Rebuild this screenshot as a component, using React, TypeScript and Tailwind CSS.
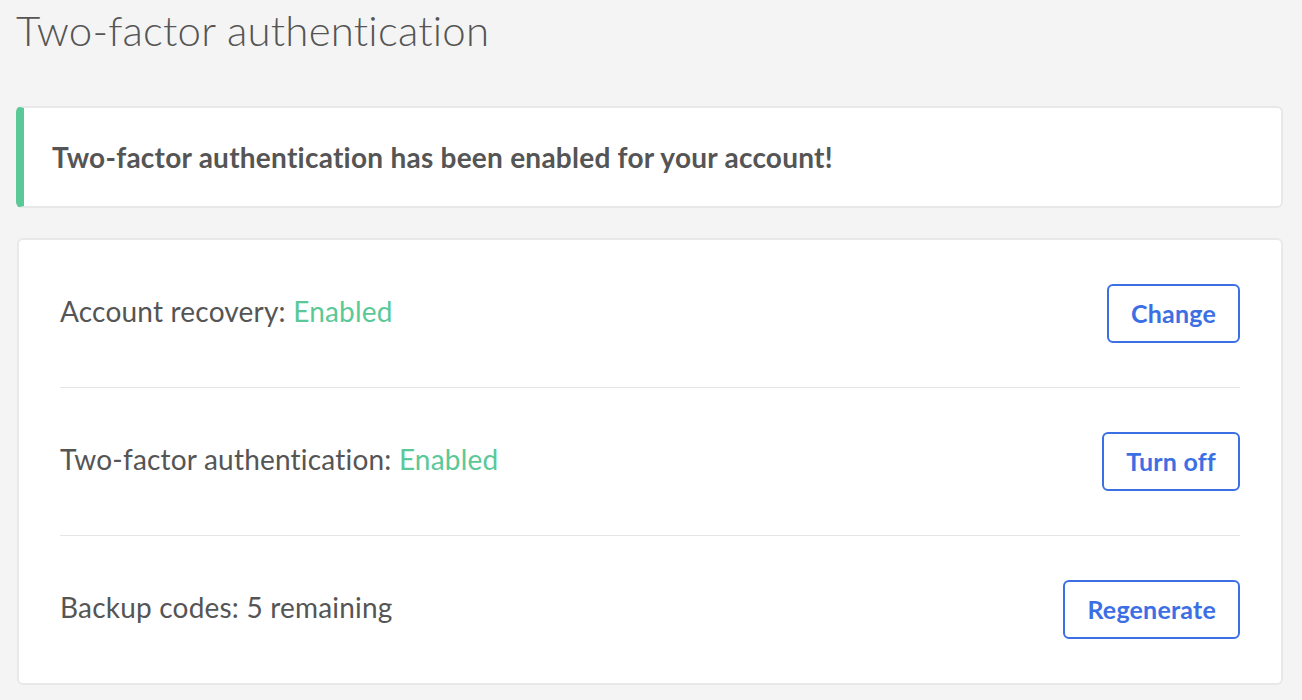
export default function App() {
  const rows = [
    { label: 'Account recovery:', status: 'Enabled', action: 'Change' },
    { label: 'Two-factor authentication:', status: 'Enabled', action: 'Turn off' },
    { label: 'Backup codes: 5 remaining', status: '', action: 'Regenerate' },
  ]

  return (
    <main className="min-h-[700px] bg-[#f4f4f4] pl-4 pr-[19px] pt-[5px] text-[#555555] font-['Lato',sans-serif] [font-variant-ligatures:none]">
      <h1 className="text-[42px] font-light leading-[50px] tracking-[0.2px]">Two-factor authentication</h1>

      {/* Success alert */}
      <div className="mt-[51px] flex h-[102px] items-center rounded-md border-2 border-l-8 border-[#e8e8e8] border-l-[#5bc898] bg-white pl-[28px]">
        <p className="text-[28px] font-bold tracking-[0.25px]">Two-factor authentication has been enabled for your account!</p>
      </div>

      {/* Settings card */}
      <div className="mt-[30px] ml-px rounded-md border-2 border-[#e8e8e8] bg-white px-[41px]">
        {rows.map((row, i) => (
          <div
            key={row.action}
            className={`flex items-center justify-between py-[44px] ${i < rows.length - 1 ? 'border-b border-[#e5e5e5]' : ''}`}
          >
            <p className="-mt-[6px] text-[28px] leading-[36px] tracking-[0.2px]">
              {row.label}
              {row.status && <span className="text-[#5bc898]"> {row.status}</span>}
            </p>
            <button className="h-[59px] rounded-md border-2 border-[#3c6fe3] px-[22px] text-[25px] font-bold tracking-[0.2px] text-[#3c6fe3]">
              {row.action}
            </button>
          </div>
        ))}
      </div>
    </main>
  )
}
